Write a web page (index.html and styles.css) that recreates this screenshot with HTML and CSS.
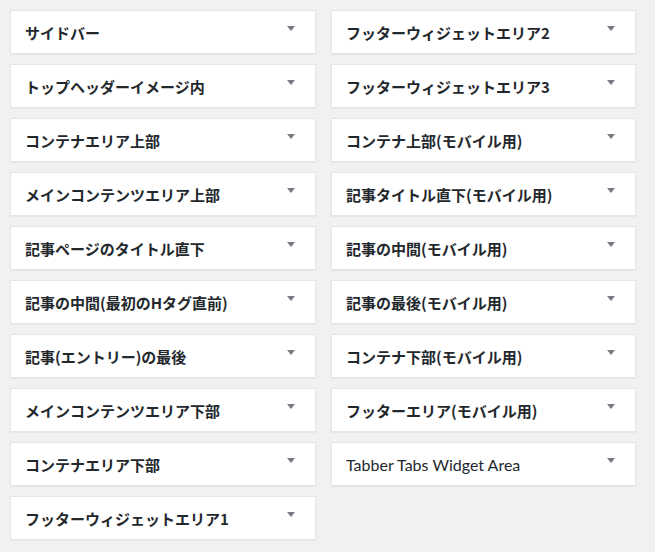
FILE: index.html
```html
<!DOCTYPE html>
<html lang="ja">
<head>
<meta charset="utf-8">
<link rel="stylesheet" href="styles.css">
</head>
<body>
<div class="areas">
  <div class="col col-left">
    <div class="area"><h2 class="title">サイドバー</h2><span class="arrow"></span></div>
    <div class="area"><h2 class="title">トップヘッダーイメージ内</h2><span class="arrow"></span></div>
    <div class="area"><h2 class="title">コンテナエリア上部</h2><span class="arrow"></span></div>
    <div class="area"><h2 class="title">メインコンテンツエリア上部</h2><span class="arrow"></span></div>
    <div class="area"><h2 class="title">記事ページのタイトル直下</h2><span class="arrow"></span></div>
    <div class="area"><h2 class="title">記事の中間(最初のHタグ直前)</h2><span class="arrow"></span></div>
    <div class="area"><h2 class="title">記事(エントリー)の最後</h2><span class="arrow"></span></div>
    <div class="area"><h2 class="title">メインコンテンツエリア下部</h2><span class="arrow"></span></div>
    <div class="area"><h2 class="title">コンテナエリア下部</h2><span class="arrow"></span></div>
    <div class="area"><h2 class="title">フッターウィジェットエリア1</h2><span class="arrow"></span></div>
  </div>
  <div class="col col-right">
    <div class="area"><h2 class="title">フッターウィジェットエリア2</h2><span class="arrow"></span></div>
    <div class="area"><h2 class="title">フッターウィジェットエリア3</h2><span class="arrow"></span></div>
    <div class="area"><h2 class="title">コンテナ上部(モバイル用)</h2><span class="arrow"></span></div>
    <div class="area"><h2 class="title">記事タイトル直下(モバイル用)</h2><span class="arrow"></span></div>
    <div class="area"><h2 class="title">記事の中間(モバイル用)</h2><span class="arrow"></span></div>
    <div class="area"><h2 class="title">記事の最後(モバイル用)</h2><span class="arrow"></span></div>
    <div class="area"><h2 class="title">コンテナ下部(モバイル用)</h2><span class="arrow"></span></div>
    <div class="area"><h2 class="title">フッターエリア(モバイル用)</h2><span class="arrow"></span></div>
    <div class="area"><h2 class="title plain">Tabber Tabs Widget Area</h2><span class="arrow"></span></div>
  </div>
</div>
</body>
</html>
```

FILE: styles.css
```css
html, body {
  margin: 0;
  padding: 0;
  background: #f1f1f1;
}
body {
  padding: 10px;
  font-family: "Noto Sans CJK JP", "Noto Sans", sans-serif;
  color: #23282d;
}
.areas {
  display: flex;
  gap: 15px;
  align-items: flex-start;
}
.col {
  display: flex;
  flex-direction: column;
  gap: 10px;
}
.col-left { width: 306px; }
.col-right { width: 305px; }
.area {
  box-sizing: border-box;
  height: 44px;
  background: #fff;
  border: 1px solid #e5e5e5;
  box-shadow: 0 1px 1px rgba(0,0,0,0.04);
  display: flex;
  align-items: center;
  justify-content: space-between;
  padding: 0 20px 0 14px;
}
.title {
  margin: 0;
  font-size: 15px;
  font-weight: 700;
  line-height: 1;
  letter-spacing: 0;
}
.title.plain {
  font-weight: 400;
  font-size: 16px;
  font-family: "Lato", "Noto Sans", sans-serif;
  position: relative;
  top: 1px;
}
.arrow {
  width: 0;
  height: 0;
  border-left: 4px solid transparent;
  border-right: 4px solid transparent;
  border-top: 5px solid #787c82;
  align-self: flex-start;
  margin-top: 15px;
}
```
